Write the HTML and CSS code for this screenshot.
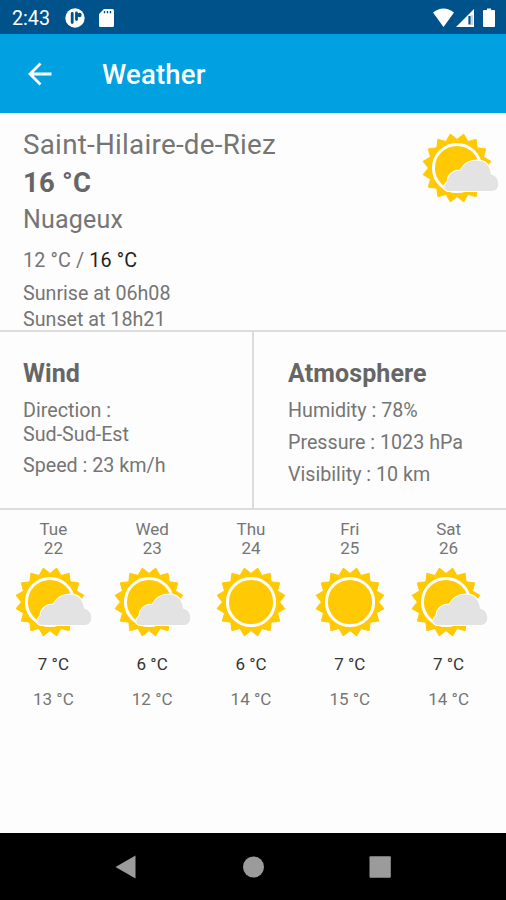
FILE: index.html
```html
<!DOCTYPE html>
<html lang="en">
<head>
<meta charset="utf-8">
<title>Weather</title>
<link rel="stylesheet" href="styles.css">
</head>
<body>
<svg class="defs" width="0" height="0" aria-hidden="true">
  <defs>
    <g id="sun">
      <path class="sun-fill" d="M0-28.6L6.7-33.9 11-26.5 19.1-28.7 20.2-20.2 28.7-19.1 26.5-11 33.9-6.700 28.600 0 33.900 6.700 26.500 11 28.700 19.100 20.200 20.200 19.100 28.700 11 26.500 6.700 33.900 0 28.600-6.700 33.900-11 26.500-19.100 28.700-20.200 20.200-28.700 19.100-26.500 11-33.900 6.700-28.600 0-33.900-6.700-26.500-11-28.700-19.100-20.200-20.200-19.100-28.700-11-26.500-6.700-33.900Z"/>
      <circle class="sun-ring" r="23.600"/>
    </g>
    <path id="cloud" class="cloud" d="M-9 23C-13.500 22-14 17.500-9.500 14C-9.500 7-4 2.500 3.500 2.500C7-4.500 13-7.500 20-7.500C28-7.500 33-2.500 34 6.500C38.500 7.500 41.300 11 41.300 15.500C41.300 20 39 23 35 23Z"/>
  </defs>
</svg>
<div class="screen">
  <header class="status">
    <span class="clock">2:43</span>
    <svg class="status-left" width="52" height="22" viewBox="0 0 52 22">
      <circle cx="10" cy="11" r="9.700" fill="#fff"/>
      <path d="M7.200 6.500v9M11.500 6v6.500" stroke="#00528a" stroke-width="2.800" stroke-linecap="round"/>
      <circle cx="14.500" cy="8" r="2.200" fill="#00528a"/>
      <path d="M39 2H47.500a1.500 1.500 0 0 1 1.500 1.500V18.500a1.500 1.500 0 0 1-1.500 1.500H35.500a1.500 1.500 0 0 1-1.500-1.500V7Z" fill="#fff"/>
      <path d="M39.500 4v2.200M42.500 4v2.200M45.500 4v2.200" stroke="#00528a" stroke-width="1.400"/>
    </svg>
    <svg class="status-right" width="64" height="22" viewBox="0 0 64 22">
      <path d="M0 5.500Q10.500-2.500 21 5.500L10.500 20Z" fill="#fff"/>
      <path d="M41 2V20H23Z" fill="#fff"/>
      <path d="M36.500 9V17.500" stroke="#00528a" stroke-width="2.200"/>
      <path d="M39 8V18" stroke="#8daece" stroke-width="1"/>
      <path d="M54 3V1.500h4V3h3a1 1 0 0 1 1 1V19a1 1 0 0 1-1 1H51a1 1 0 0 1-1-1V4a1 1 0 0 1 1-1Z" fill="#fff"/>
    </svg>
  </header>
  <nav class="toolbar">
    <svg width="24" height="24" viewBox="0 0 24 24"><path d="M23.500 12H2.500M12.500 1.500L2 12 12.500 22.500" fill="none" stroke="#fff" stroke-width="2.800"/></svg>
    <h1>Weather</h1>
  </nav>
  <main>
    <section class="current">
      <div>
        <p class="place">Saint-Hilaire-de-Riez</p>
        <p class="temp">16 °C</p>
        <p class="sky">Nuageux</p>
        <p class="range">12 °C / <span>16 °C</span></p>
        <p class="sunrise">Sunrise at 06h08</p>
        <p class="sunset">Sunset at 18h21</p>
      </div>
      <svg class="icon" width="80" height="72" viewBox="-37 -36 80 72"><use href="#sun"/><use href="#cloud"/></svg>
    </section>
    <section class="details">
      <div class="wind">
        <h2>Wind</h2>
        <p>Direction :<br>Sud-Sud-Est</p>
        <p>Speed : 23 km/h</p>
      </div>
      <div class="atmosphere">
        <h2>Atmosphere</h2>
        <p>Humidity : 78%</p>
        <p>Pressure : 1023 hPa</p>
        <p>Visibility : 10 km</p>
      </div>
    </section>
    <section class="forecast">
      <article><p>Tue<br>22</p><svg width="80" height="72" viewBox="-37 -36 80 72"><use href="#sun"/><use href="#cloud"/></svg><p class="low">7 °C</p><p class="high">13 °C</p></article>
      <article><p>Wed<br>23</p><svg width="80" height="72" viewBox="-37 -36 80 72"><use href="#sun"/><use href="#cloud"/></svg><p class="low">6 °C</p><p class="high">12 °C</p></article>
      <article><p>Thu<br>24</p><svg width="80" height="72" viewBox="-40 -36 80 72"><use href="#sun"/></svg><p class="low">6 °C</p><p class="high">14 °C</p></article>
      <article><p>Fri<br>25</p><svg width="80" height="72" viewBox="-40 -36 80 72"><use href="#sun"/></svg><p class="low">7 °C</p><p class="high">15 °C</p></article>
      <article><p>Sat<br>26</p><svg width="80" height="72" viewBox="-37 -36 80 72"><use href="#sun"/><use href="#cloud"/></svg><p class="low">7 °C</p><p class="high">14 °C</p></article>
    </section>
  </main>
  <footer class="navbar">
    <svg width="24" height="24" viewBox="0 0 24 24"><path d="M1.500 12L21.500 .5V23.500Z"/></svg>
    <svg width="24" height="24" viewBox="0 0 24 24"><circle cx="12.500" cy="12" r="10.500"/></svg>
    <svg width="24" height="24" viewBox="0 0 24 24"><rect x="1.500" y="1.300" width="21.300" height="21.500" rx="1"/></svg>
  </footer>
</div>
</body>
</html>
```
FILE: styles.css
```css
* { box-sizing: border-box; }
body, h1, h2, p { margin: 0; }
body { background: #fdfdfd; color: #757575; font-family: Roboto, sans-serif; }
svg { display: block; flex: none; }
.defs { position: absolute; }
.screen { width: 506px; height: 900px; display: flex; flex-direction: column; overflow: hidden; }

.status { height: 34px; background: #00528a; color: #fff; display: flex; align-items: center; padding: 1px 9px 0 12px; }
.clock { font-size: 19.7px; line-height: 33px; width: 53px; padding-top: 1px; }
.status-right { margin-left: auto; }

.toolbar { height: 79px; background: #00a0e1; color: #fff; display: flex; align-items: center; padding: 0 28px; }
.toolbar h1 { font-size: 27.5px; font-weight: 500; line-height: 32px; margin: 3px 0 0 50px; letter-spacing: .2px; }

main { flex: 1; }
.current { height: 219px; padding: 14px 6px 0 23px; display: flex; justify-content: space-between; border-bottom: 2px solid #dcdcdc; }
.current .icon { margin-top: 5px; }
.place { font-size: 27.8px; line-height: 36px; letter-spacing: .25px; }
.temp { font-size: 27.5px; font-weight: 700; line-height: 38px; color: #666; letter-spacing: .2px; padding-top: 1px; }
.sky { font-size: 25px; line-height: 36px; letter-spacing: .2px; }
.range, .sunrise, .sunset { font-size: 19.7px; }
.range { line-height: 24px; margin-top: 11px; letter-spacing: .15px; }
.range span { color: #222; }
.sunrise { line-height: 26px; margin-top: 8px; }
.sunset { line-height: 26px; }

.details { height: 178px; display: grid; grid-template-columns: 254px 1fr; border-bottom: 2px solid #dcdcdc; }
.wind { padding: 26px 0 0 23px; border-right: 2px solid #dcdcdc; }
.atmosphere { padding: 26px 0 0 34px; }
.details h2 { font-size: 25px; font-weight: 700; line-height: 32px; color: #666; margin-bottom: 9px; letter-spacing: .1px; }
.details p { font-size: 19.7px; line-height: 24px; margin-bottom: 8px; }
.details .wind p { line-height: 23.5px; }

.forecast { display: grid; grid-template-columns: repeat(5, 1fr); padding: 10px 8px 0 4px; text-align: center; }
.forecast article { display: flex; flex-direction: column; align-items: center; }
.forecast p { font-size: 17px; line-height: 19px; }
.forecast svg { margin-top: 8px; }
.forecast .low { color: #333; margin-top: 17px; }
.forecast .high { margin-top: 16px; }

.sun-fill { fill: #ffc904; stroke: #ffc904; stroke-width: 1; stroke-linejoin: round; }
.sun-ring { fill: none; stroke: #fff; stroke-width: 3; }
.cloud { fill: #e3e3e4; stroke: #fff; stroke-width: 2; paint-order: stroke; }

.navbar { height: 67px; background: #000; display: flex; align-items: center; justify-content: space-between; padding: 0 114px; }
.navbar svg { fill: #9b9b9b; }
```
